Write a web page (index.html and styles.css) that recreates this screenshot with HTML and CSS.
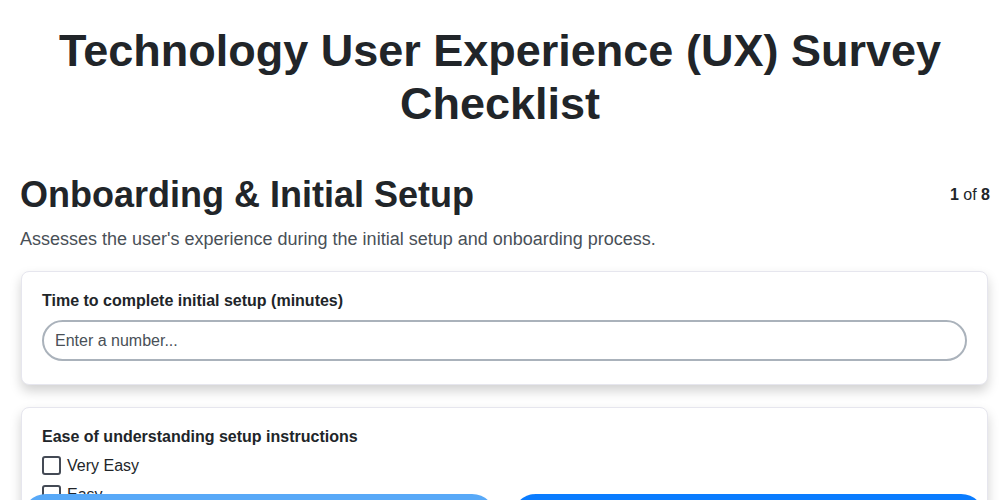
FILE: index.html
```html
<!DOCTYPE html>
<html lang="en">
<head>
    <meta charset="UTF-8">
    <meta name="viewport" content="width=device-width, initial-scale=1.0">
    <title>Technology User Experience (UX) Survey Checklist</title>
    <link rel="stylesheet" href="styles.css">
</head>
<body>

<header class="page-header">
    <h1>Technology User Experience (UX) Survey Checklist</h1>
</header>

<main class="survey">
    <div class="section-head">
        <h2>Onboarding &amp; Initial Setup</h2>
        <span class="progress"><b>1</b> of <b>8</b></span>
    </div>
    <p class="section-desc">Assesses the user's experience during the initial setup and onboarding process.</p>

    <!-- question 1 -->
    <div class="question-card">
        <label class="question-label" for="setupTime">Time to complete initial setup (minutes)</label>
        <input type="number" id="setupTime" class="text-input" placeholder="Enter a number...">
    </div>

    <!-- question 2 -->
    <div class="question-card">
        <p class="question-label tight">Ease of understanding setup instructions</p>
        <label class="option"><input type="checkbox"> Very Easy</label>
        <label class="option"><input type="checkbox"> Easy</label>
        <label class="option"><input type="checkbox"> Neutral</label>
        <label class="option"><input type="checkbox"> Difficult</label>
        <label class="option"><input type="checkbox"> Very Difficult</label>
    </div>
</main>

<div class="nav-bar">
    <button class="nav-btn prev" disabled>Previous</button>
    <button class="nav-btn next">Next</button>
</div>

</body>
</html>
```

FILE: styles.css
```css
body {
    font-family: "Liberation Sans", Arial, sans-serif;
    margin: 0;
    padding: 0;
    background-color: #ffffff;
    color: #212529;
}

.page-header h1 {
    font-size: 45px;
    line-height: 53px;
    text-align: center;
    margin: 24px 40px 43px;
}

.survey {
    padding: 0 10px 0 20px;
}

.section-head {
    display: flex;
    justify-content: space-between;
    align-items: center;
}

.section-head h2 {
    font-size: 36px;
    margin: 0;
    line-height: 44px;
}

.progress {
    font-size: 16px;
    color: #212529;
}

.section-desc {
    font-size: 18px;
    color: #495057;
    margin: 12px 0 21px;
}

.question-card {
    background-color: white;
    border: 1px solid #e6e6ee;
    border-radius: 8px;
    box-shadow: 0 6px 12px rgba(0, 0, 0, 0.18);
    padding: 20px 20px 23px;
    margin: 0 2px 22px 1px;
}

.question-label {
    display: block;
    font-weight: bold;
    font-size: 16px;
    margin: 0 0 10px;
}

.question-label.tight {
    margin-bottom: 5px;
}

.text-input {
    width: 100%;
    box-sizing: border-box;
    height: 41px;
    padding: 0 11px;
    font-size: 16px;
    font-family: inherit;
    border: 2px solid #aab2bb;
    border-radius: 21px;
    color: #212529;
}

.text-input::placeholder {
    color: #495057;
}

.option {
    display: flex;
    align-items: center;
    gap: 4px;
    font-size: 16px;
    height: 29px;
}

.option input {
    width: 19px;
    height: 19px;
    margin: 0 2px 0 0;
    appearance: none;
    border: 2px solid #444a55;
    border-radius: 3px;
    background: white;
}

.nav-bar {
    position: fixed;
    left: 0;
    right: 0;
    bottom: 0;
    display: flex;
    gap: 16px;
    padding: 0 15px 0 22px;
    background: transparent;
}

.nav-btn {
    flex: 1;
    height: 48px;
    border: none;
    border-radius: 24px;
    color: white;
    font-size: 18px;
    font-family: inherit;
    font-weight: bold;
    transform: translateY(42px);
}

.nav-btn.prev {
    background-color: #58a9f8;
}

.nav-btn.next {
    background-color: #0a7cff;
}
```
